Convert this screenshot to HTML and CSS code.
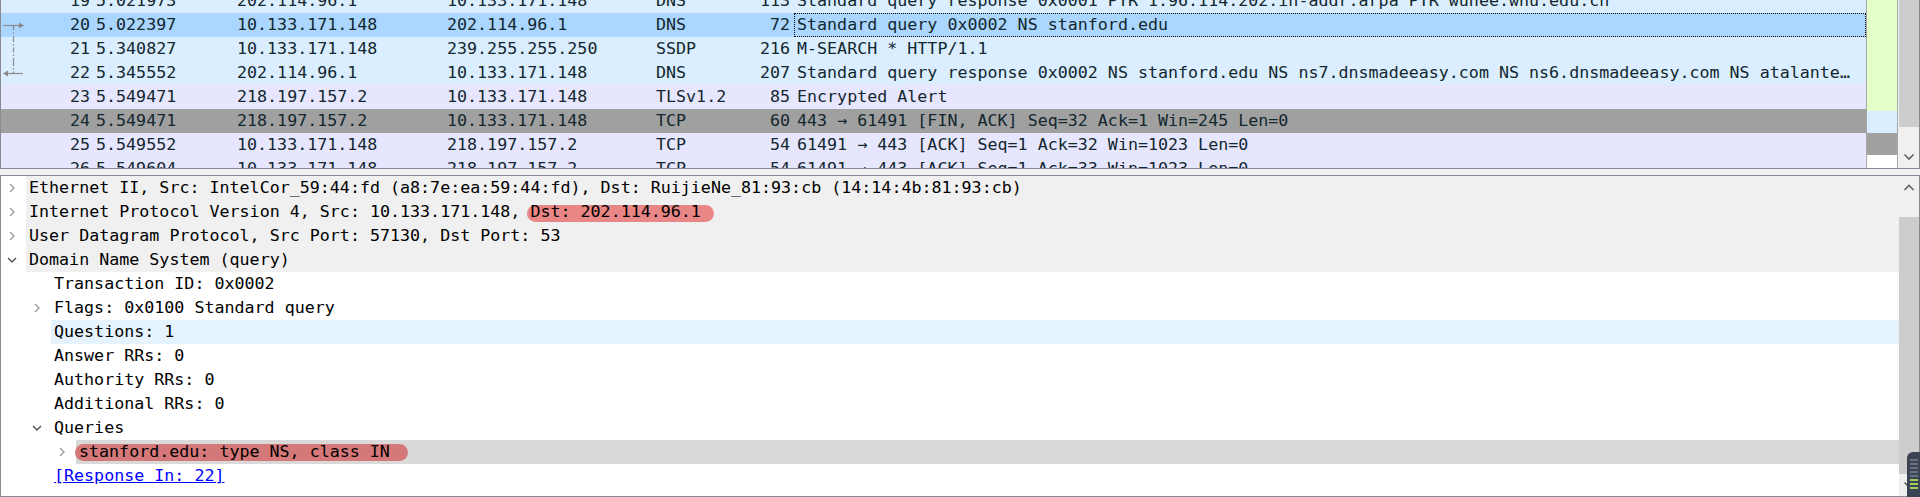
FILE: index.html
```html
<!DOCTYPE html>
<html>
<head>
<meta charset="utf-8">
<link rel="stylesheet" href="styles.css">
</head>
<body>
<div class="window">
  <div class="pane list-pane">
    <div class="list">
      <div class="rows">
        <div class="prow udp">
          <span class="c rel"></span><span class="c no">19</span><span class="c time">5.021973</span><span class="c src">202.114.96.1</span><span class="c dst">10.133.171.148</span><span class="c proto">DNS</span><span class="c len">113</span><span class="c info">Standard query response 0x0001 PTR 1.96.114.202.in-addr.arpa PTR wuhee.whu.edu.cn</span>
        </div>
        <div class="prow sel">
          <span class="c rel"><svg width="40" height="24" viewBox="0 0 40 24"><line x1="2" y1="12.5" x2="19" y2="12.5" class="rl"/><polygon points="18,9.5 23,12.5 18,15.5" class="rh"/><line x1="12.5" y1="12.5" x2="12.5" y2="24" class="rd"/></svg></span><span class="c no">20</span><span class="c time">5.022397</span><span class="c src">10.133.171.148</span><span class="c dst">202.114.96.1</span><span class="c proto">DNS</span><span class="c len">72</span><span class="c info focus">Standard query 0x0002 NS stanford.edu</span>
        </div>
        <div class="prow udp">
          <span class="c rel"><svg width="40" height="24" viewBox="0 0 40 24"><line x1="12.5" y1="0" x2="12.5" y2="24" class="rd"/></svg></span><span class="c no">21</span><span class="c time">5.340827</span><span class="c src">10.133.171.148</span><span class="c dst">239.255.255.250</span><span class="c proto">SSDP</span><span class="c len">216</span><span class="c info">M-SEARCH * HTTP/1.1</span>
        </div>
        <div class="prow udp">
          <span class="c rel"><svg width="40" height="24" viewBox="0 0 40 24"><line x1="12.5" y1="0" x2="12.5" y2="12.5" class="rd"/><line x1="6" y1="12.5" x2="22" y2="12.5" class="rl"/><polygon points="2,12.5 7,9.5 7,15.5" class="rh"/></svg></span><span class="c no">22</span><span class="c time">5.345552</span><span class="c src">202.114.96.1</span><span class="c dst">10.133.171.148</span><span class="c proto">DNS</span><span class="c len">207</span><span class="c info">Standard query response 0x0002 NS stanford.edu NS ns7.dnsmadeeasy.com NS ns6.dnsmadeeasy.com NS atalante…</span>
        </div>
        <div class="prow tcp">
          <span class="c rel"></span><span class="c no">23</span><span class="c time">5.549471</span><span class="c src">218.197.157.2</span><span class="c dst">10.133.171.148</span><span class="c proto">TLSv1.2</span><span class="c len">85</span><span class="c info">Encrypted Alert</span>
        </div>
        <div class="prow fin">
          <span class="c rel"></span><span class="c no">24</span><span class="c time">5.549471</span><span class="c src">218.197.157.2</span><span class="c dst">10.133.171.148</span><span class="c proto">TCP</span><span class="c len">60</span><span class="c info">443 → 61491 [FIN, ACK] Seq=32 Ack=1 Win=245 Len=0</span>
        </div>
        <div class="prow tcp">
          <span class="c rel"></span><span class="c no">25</span><span class="c time">5.549552</span><span class="c src">10.133.171.148</span><span class="c dst">218.197.157.2</span><span class="c proto">TCP</span><span class="c len">54</span><span class="c info">61491 → 443 [ACK] Seq=1 Ack=32 Win=1023 Len=0</span>
        </div>
        <div class="prow tcp">
          <span class="c rel"></span><span class="c no">26</span><span class="c time">5.549604</span><span class="c src">10.133.171.148</span><span class="c dst">218.197.157.2</span><span class="c proto">TCP</span><span class="c len">54</span><span class="c info">61491 → 443 [ACK] Seq=1 Ack=33 Win=1023 Len=0</span>
        </div>
      </div>
    </div>
    <div class="vsep"></div>
    <div class="minimap">
      <div class="mm mm-green"></div>
      <div class="mm mm-blue"></div>
      <div class="mm mm-gray"></div>
      <div class="mm mm-white"></div>
    </div>
    <div class="vsep2"></div>
    <div class="vscroll top-scroll">
      <div class="thumb top-thumb"></div>
      <div class="track-fill"></div>
      <div class="sbtn"><svg width="20" height="22" viewBox="0 0 20 22"><polyline points="5.5,8.5 10,13 14.5,8.5" class="chev"/></svg></div>
    </div>
  </div>

  <div class="gap"></div>

  <div class="pane tree-pane">
    <div class="tree">
      <div class="trow l1 top">
        <span class="branch"><svg class="arr" width="10" height="24" viewBox="0 0 10 24"><polyline points="3,8 7,12 3,16" class="col"/></svg></span>
        <span class="item">Ethernet II, Src: IntelCor_59:44:fd (a8:7e:ea:59:44:fd), Dst: RuijieNe_81:93:cb (14:14:4b:81:93:cb)</span>
      </div>
      <div class="trow l1 top">
        <span class="branch"><svg class="arr" width="10" height="24" viewBox="0 0 10 24"><polyline points="3,8 7,12 3,16" class="col"/></svg></span>
        <span class="item">Internet Protocol Version 4, Src: 10.133.171.148, <span class="pill pill-a">Dst: 202.114.96.1</span></span>
      </div>
      <div class="trow l1 top">
        <span class="branch"><svg class="arr" width="10" height="24" viewBox="0 0 10 24"><polyline points="3,8 7,12 3,16" class="col"/></svg></span>
        <span class="item">User Datagram Protocol, Src Port: 57130, Dst Port: 53</span>
      </div>
      <div class="trow l1 top">
        <span class="branch"><svg class="arr" width="10" height="24" viewBox="0 0 10 24"><polyline points="1,10 5,14 9,10" class="exp"/></svg></span>
        <span class="item">Domain Name System (query)</span>
      </div>
      <div class="trow l2">
        <span class="branch"></span>
        <span class="item">Transaction ID: 0x0002</span>
      </div>
      <div class="trow l2">
        <span class="branch"><svg class="arr" width="10" height="24" viewBox="0 0 10 24"><polyline points="3,8 7,12 3,16" class="col"/></svg></span>
        <span class="item">Flags: 0x0100 Standard query</span>
      </div>
      <div class="trow l2 hover">
        <span class="branch"></span>
        <span class="item">Questions: 1</span>
      </div>
      <div class="trow l2">
        <span class="branch"></span>
        <span class="item">Answer RRs: 0</span>
      </div>
      <div class="trow l2">
        <span class="branch"></span>
        <span class="item">Authority RRs: 0</span>
      </div>
      <div class="trow l2">
        <span class="branch"></span>
        <span class="item">Additional RRs: 0</span>
      </div>
      <div class="trow l2">
        <span class="branch"><svg class="arr" width="10" height="24" viewBox="0 0 10 24"><polyline points="1,10 5,14 9,10" class="exp"/></svg></span>
        <span class="item">Queries</span>
      </div>
      <div class="trow l3 picked">
        <span class="branch"><svg class="arr" width="10" height="24" viewBox="0 0 10 24"><polyline points="3,8 7,12 3,16" class="col"/></svg></span>
        <span class="item"><span class="pill pill-b">stanford.edu: type NS, class IN</span></span>
      </div>
      <div class="trow l2">
        <span class="branch"></span>
        <span class="item"><span class="link">[Response In: 22]</span></span>
      </div>
    </div>
    <div class="vscroll tree-scroll">
      <div class="sbtn"><svg width="20" height="24" viewBox="0 0 20 24"><polyline points="5.5,14 10,9.5 14.5,14" class="chev"/></svg></div>
      <div class="track-gap"></div>
      <div class="thumb tree-thumb"></div>
      <div class="track-fill"></div>
      <div class="sbtn"><svg width="20" height="22" viewBox="0 0 20 22"><polyline points="5.5,8.5 10,13 14.5,8.5" class="chev"/></svg></div>
    </div>
  </div>

  <div class="float-widget">
    <div class="fw-bars">
      <span class="bar"></span><span class="bar"></span><span class="bar"></span><span class="bar"></span><span class="bar"></span>
      <span class="bar g"></span><span class="bar g"></span><span class="bar g"></span>
    </div>
  </div>
</div>
</body>
</html>
```

FILE: styles.css
```css
* { box-sizing: border-box; }
html, body {
  margin: 0;
  padding: 0;
  background: #f0f0f0;
  width: 1920px;
  height: 497px;
  overflow: hidden;
}
body {
  font-family: "DejaVu Sans Mono", "Liberation Mono", monospace;
  font-size: 16.67px;
  line-height: 24px;
  color: #000;
}
.window {
  position: relative;
  width: 1920px;
  height: 497px;
  display: flex;
  flex-direction: column;
}
.pane {
  border: 1px solid #8a8a94;
  background: #fff;
  display: flex;
}

/* ---------- packet list ---------- */
.list-pane {
  height: 169px;
  border-top: none;
  flex: none;
}
.list {
  width: 1865px;
  overflow: hidden;
  background: #e7e6ff;
}
.rows {
  margin-top: -11px;
}
.prow {
  display: grid;
  grid-template-columns: 40px 49px 147px 210px 209px 84px 54px 1fr;
  height: 24px;
  color: #12272e;
  white-space: nowrap;
}
.prow.udp { background: #daeeff; }
.prow.sel { background: #abd6ff; }
.prow.tcp { background: #e7e6ff; }
.prow.fin { background: #a0a0a0; }
.c { overflow: hidden; }
.rel { display: flex; }
.no { text-align: right; }
.time { padding-left: 6px; }
.len { text-align: right; padding-right: 4px; }
.info { padding-left: 3px; }
.info.focus {
  outline: 1px dotted #000;
  outline-offset: -1px;
}
.rl { stroke: #8a8a8a; stroke-width: 1.2; }
.rh { fill: #8a8a8a; }
.rd { stroke: #8a8a8a; stroke-width: 1.2; stroke-dasharray: 5 2 1.5 2; }

.vsep { width: 1px; background: #a8a8a8; }
.minimap {
  width: 30px;
  display: flex;
  flex-direction: column;
}
.mm-green { height: 111px; background: #e4ffc8; }
.mm-blue { height: 22px; background: #daeeff; }
.mm-gray { height: 22px; background: #a0a0a0; }
.mm-white { flex: 1; background: #fff; }
.vsep2 { width: 2px; border-left: 1px solid #a8a8a8; background: #f0f0f0; }

.vscroll {
  width: 20px;
  background: #f0f0f0;
  display: flex;
  flex-direction: column;
}
.top-thumb { height: 127px; background: #cdcdcd; flex: none; }
.track-fill { flex: 1; }
.sbtn { flex: none; display: flex; }
.chev { fill: none; stroke: #606060; stroke-width: 1.6; }

.gap { height: 6px; flex: none; }

/* ---------- details tree ---------- */
.tree-pane {
  height: 322px;
  flex: none;
}
.tree {
  width: 1898px;
  overflow: hidden;
}
.trow {
  display: flex;
  height: 24px;
  white-space: nowrap;
}
.branch {
  flex: none;
  display: flex;
  justify-content: flex-end;
}
.arr { margin-right: 9px; }
.l1 .branch { width: 25px; }
.l2 .branch { width: 50px; }
.l3 .branch { width: 75px; }
.item {
  flex: 1;
  padding-left: 3px;
}
.top .item { background: #f0f0f0; }
.hover .item { background: #e5f3ff; }
.picked .item { background: #d9d9d9; }
.col { fill: none; stroke: #9c9c9c; stroke-width: 1.4; }
.exp { fill: none; stroke: #555; stroke-width: 1.5; }

.pill {
  position: relative;
  z-index: 0;
}
.pill::before {
  content: "";
  position: absolute;
  z-index: -1;
  border-radius: 9px;
}
.pill-a::before {
  left: -3px;
  right: -13px;
  top: 3px;
  bottom: -1px;
  background: #e98686;
}
.pill-b::before {
  left: -4px;
  right: -18px;
  top: 2px;
  bottom: 0;
  background: #d47879;
}
.link {
  color: #0000ff;
  text-decoration: underline;
}

.tree-scroll { width: 20px; }
.tree-scroll .sbtn:first-child { height: 24px; }
.track-gap { height: 17px; flex: none; }
.tree-thumb { height: 257px; background: #cdcdcd; flex: none; }

/* floating widget over the bottom-right corner */
.float-widget {
  position: absolute;
  right: 0;
  bottom: 0;
  width: 13px;
  height: 45px;
  background: #3c4352;
  border-radius: 6px 0 0 0;
  padding: 7px 2px 0 3px;
}
.fw-bars {
  display: flex;
  flex-direction: column;
  gap: 2px;
}
.bar {
  display: block;
  height: 2px;
  background: #6a7282;
}
.bar.g { background: #9fcf5a; }
```
